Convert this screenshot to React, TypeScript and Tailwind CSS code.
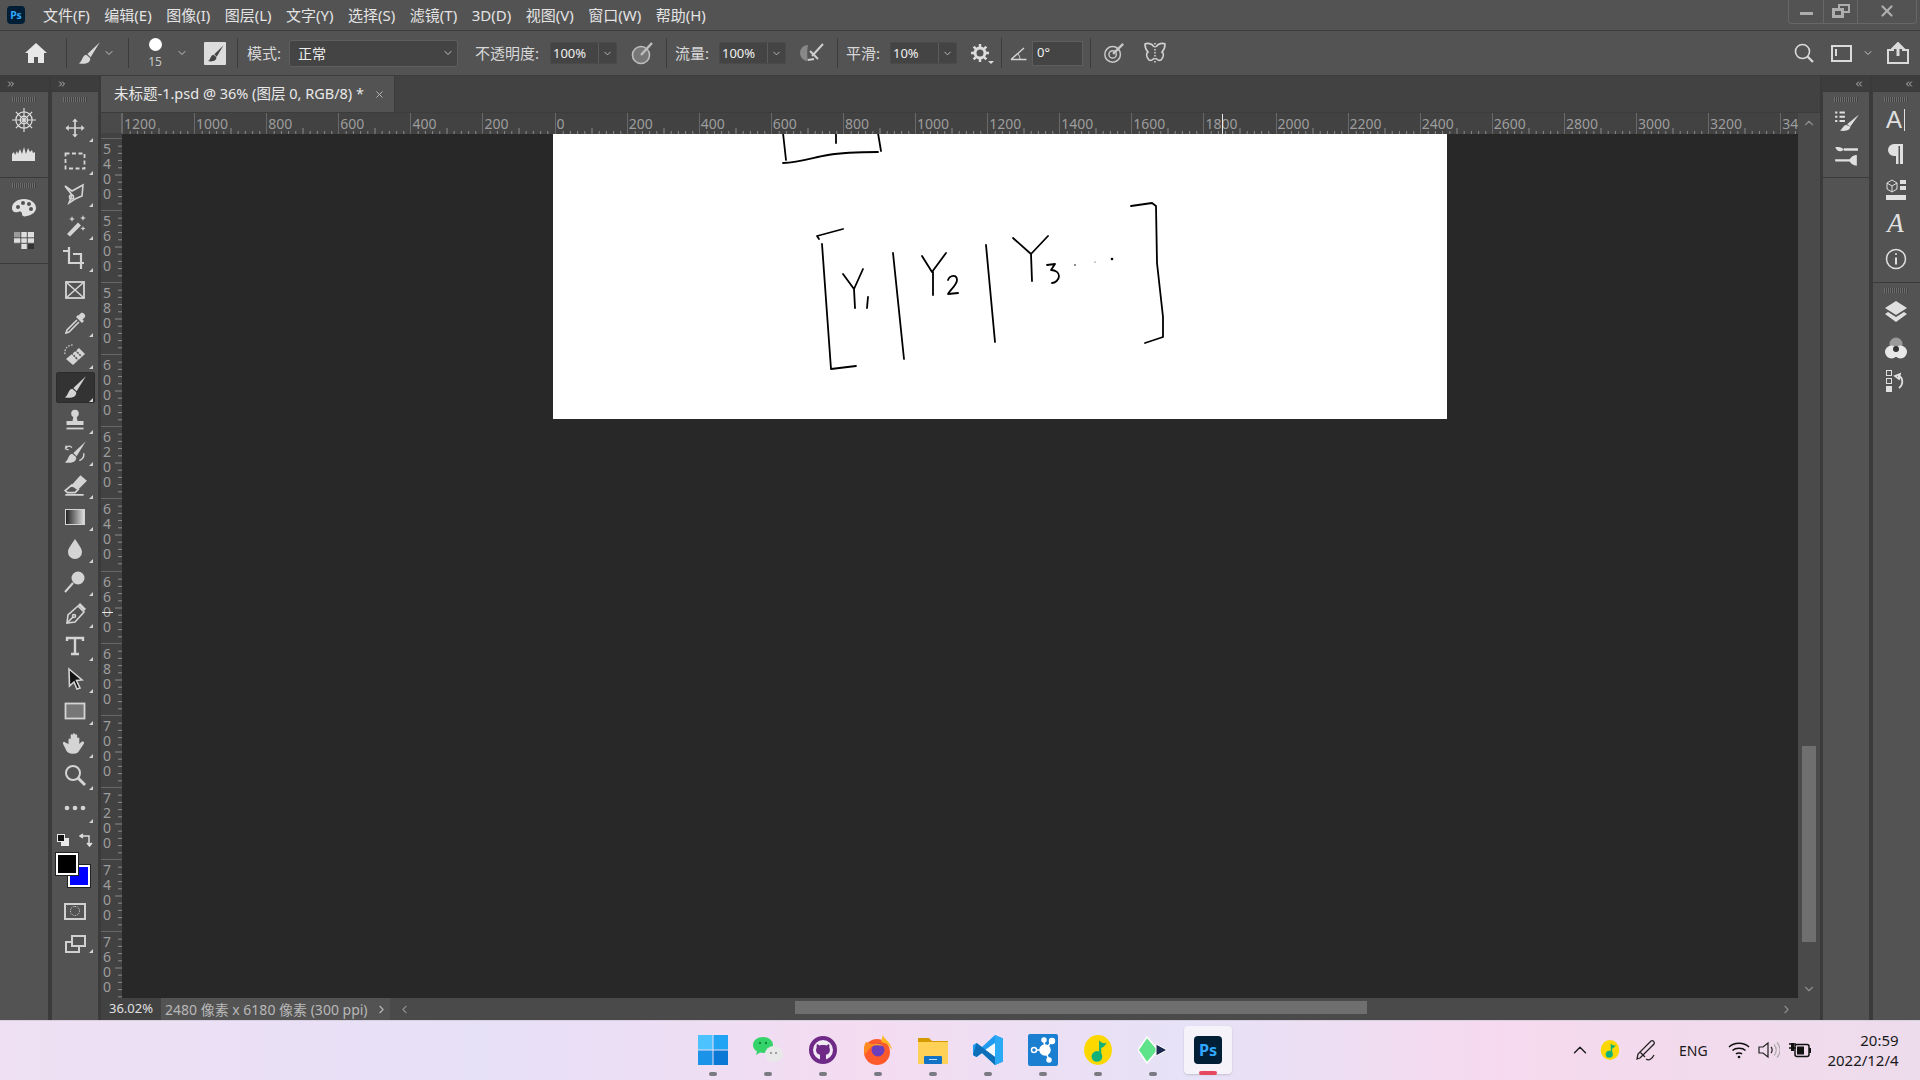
import React from "react";
import { ChevronDown, ChevronUp, ChevronLeft, ChevronRight, ChevronsRight, ChevronsLeft, X } from "lucide-react";

const FONT = "font-['Noto_Sans','Noto_Sans_CJK_SC',sans-serif]";

function Ic({ children, s = 24, className = "" }: { children: React.ReactNode; s?: number; className?: string }) {
  return (
    <svg width={s} height={s} viewBox="0 0 24 24" fill="none" stroke="currentColor" strokeWidth={1.6} className={className}>
      {children}
    </svg>
  );
}

const brushPath = (
  <>
    <path d="M22 2 L10.500 13 L13.500 16 Z" fill="currentColor" stroke="none" />
    <path d="M9.500 13.500 C5 14.500 6.500 19.500 2.500 21.500 C8 23 14 21 13 16.500 Z" fill="currentColor" stroke="none" />
  </>
);

const tools: { n: React.ReactNode; tri?: boolean; active?: boolean; s?: number }[] = [
  { tri: true, s: 20, n: <><path d="M12 3v18M3 12h18" strokeWidth={2} /><path d="M12 .5l3.500 4H8.500zM12 23.500l3.500-4H8.500zM.5 12l4-3.500v7zM23.500 12l-4-3.500v7z" fill="currentColor" stroke="none" /></> },
  { tri: true, s: 24, n: <rect x="2.500" y="4.500" width="19" height="15" strokeDasharray="4 2.500" strokeWidth={1.800} /> },
  { tri: true, s: 24, n: <><path d="M2 5l7 5 11-6-1 11-7 3-6 4 3-8-7-9z" /><circle cx="8.500" cy="16" r="2" /></> },
  { tri: true, s: 24, n: <><path d="M4 21L15 9.500l3 3L7 23.500z" fill="currentColor" stroke="none" /><path d="M9 3l.8 2.200 2.200.8-2.200.8L9 9l-.8-2.200L6 6l2.200-.8zM20 2l.8 2.200 2.200.8-2.200.8L20 8l-.8-2.200L17 5l2.200-.8zM20 13l.7 1.800 1.800.7-1.800.7-.7 1.800-.7-1.800-1.800-.7 1.800-.7z" fill="currentColor" stroke="none" /></> },
  { tri: true, s: 24, n: <path d="M0 5h6M6 1v16h15M18 23V8H10" strokeWidth={2.200} /> },
  { s: 24, n: <><rect x="3" y="4" width="18" height="16" strokeWidth={1.800} /><path d="M3 4l18 16M21 4L3 20" /></> },
  { tri: true, s: 24, n: <><path d="M14 9L4 19l-1 3 3-1L16 11" /><path d="M13 6l6 6 2-2-1.500-1.500L22 6c1-2-2-5-4-4l-2.500 2.500L15 4z" fill="currentColor" stroke="none" /></> },
  { tri: true, s: 24, n: <><path d="M3 16L16 5l6 6L10 22z" fill="currentColor" stroke="none" /><path d="M8.500 10L15 17M12 7l6.500 6.500" stroke="#535353" strokeDasharray="2 1" /><path d="M2 11C1 7 4 2 10 2" strokeDasharray="1.500 1.500" strokeWidth={1.200} /></> },
  { tri: true, active: true, s: 26, n: brushPath },
  { tri: true, s: 24, n: <><circle cx="12" cy="5.500" r="3.800" fill="currentColor" stroke="none" /><path d="M10.500 8h3l1 5h6v4H3.500v-4h6z" fill="currentColor" stroke="none" /><path d="M3.500 20.500h17" strokeWidth={1.800} /></> },
  { tri: true, s: 26, n: <>{brushPath}<path d="M3 9c2-3 5-3 6-1M3 9l3 1M3 9l1-3M20 13c1 4-2 6-4 7" strokeWidth={1.200} /></> },
  { tri: true, s: 26, n: <><path d="M9 13L17 4l6 5-8 8z" fill="currentColor" stroke="none" /><path d="M9 13l6 4-3 3H5l-2-2zM3 22h17" /></> },
  { tri: true, n: null },
  { tri: true, s: 24, n: <path d="M12 2c3 5 7 9 7 13a7 7 0 01-14 0c0-4 4-8 7-13z" fill="currentColor" stroke="none" /> },
  { tri: true, s: 24, n: <><circle cx="15" cy="8" r="6.500" fill="currentColor" stroke="none" /><path d="M10 13L2 22" strokeWidth={2} /></> },
  { tri: true, s: 24, n: <><path d="M4 21l1-8L15 4l6 6-9 10z" /><path d="M16 2l6 6" strokeWidth={3} /><path d="M4 21l6-6" /><circle cx="11" cy="14" r="1.500" /></> },
  { tri: true, s: 24, n: <path d="M4 7V4h16v3M12 4v16M8 20h8" strokeWidth={2.400} /> },
  { tri: true, s: 24, n: <path d="M6 2l13 11-5.500.5L17 21l-3 1-3-7-4.500 4z" fill="#111" stroke="currentColor" /> },
  { tri: true, s: 24, n: <rect x="2.500" y="4.500" width="19" height="15" fill="#777" strokeWidth={1.800} /> },
  { tri: true, s: 26, n: <path d="M6 12V8a1 1 0 012 0V4a1 1 0 012 0V3a1 1 0 012 0v1a1 1 0 012 0v3a1 1 0 012 0v5l2-2c2-1 3 .5 2 2l-4 6c-1 2-3 3-5 3h-2c-3 0-5-2-6-5l-2-4c-.5-2 1-2.500 2-1.500z" fill="currentColor" stroke="none" /> },
  { tri: true, s: 24, n: <><circle cx="10" cy="9" r="7" strokeWidth={2} /><path d="M15 14l7 7" strokeWidth={3} /></> },
  { tri: true, s: 24, n: <><circle cx="4" cy="12" r="2.300" fill="currentColor" stroke="none" /><circle cx="12" cy="12" r="2.300" fill="currentColor" stroke="none" /><circle cx="20" cy="12" r="2.300" fill="currentColor" stroke="none" /></> },
];

function Tool({ t, i }: { t: (typeof tools)[number]; i: number }) {
  return (
    <div className="relative flex h-[32.400px] w-[39px] shrink-0 items-center justify-center text-[#d4d4d4]">
      {t.active && <div className="absolute inset-x-0 inset-y-px rounded-[2px] border border-[#2c2c2c] bg-[#333333]" />}
      {i === 12 ? (
        <div className="h-[16px] w-[20px] border border-[#d4d4d4] bg-[linear-gradient(90deg,#222,#ddd)]" />
      ) : (
        <span className="relative"><Ic s={t.s ?? 22}>{t.n}</Ic></span>
      )}
      {t.tri && <div className="absolute bottom-[2px] right-[2px] h-0 w-0 border-b-[4px] border-l-[4px] border-b-[#d4d4d4] border-l-transparent" />}
    </div>
  );
}

function Grip() {
  return <div className="mx-auto mt-[5px] h-[5px] w-[24px] bg-[repeating-linear-gradient(90deg,#6e6e6e_0_1px,#414141_1px_2px)]" />;
}

function Strip({ dir }: { dir: "l" | "r" }) {
  return (
    <div className="flex h-[15px] items-center bg-[#3d3d3d] px-[6px] text-[#cfcfcf]" style={{ justifyContent: dir === "r" ? "flex-start" : "flex-end" }}>
      {dir === "r" ? <ChevronsRight size={10} /> : <ChevronsLeft size={10} />}
    </div>
  );
}

function Divider() {
  return <div className="h-[30px] w-px shrink-0 bg-[#3c3c3c]" />;
}

function NumBox({ v, w = 67 }: { v: string; w?: number }) {
  return (
    <div className="flex h-[22px] items-center rounded-[2px] border border-[#4a4a4a] bg-[#444444] text-[13px] text-[#f0f0f0]" style={{ width: w }}>
      <span className="w-[48px] border-r border-[#5c5c5c] pl-[2px] leading-[20px]">{v}</span>
      <span className="flex flex-1 justify-center text-[#c0c0c0]"><ChevronDown size={11} /></span>
    </div>
  );
}

function TopRuler() {
  const labels = ["1200", "1000", "800", "600", "400", "200", "0", "200", "400", "600", "800", "1000", "1200", "1400", "1600", "1800", "2000", "2200", "2400", "2600", "2800", "3000", "3200", "3400"];
  return (
    <div className="relative flex h-[21px] flex-1 overflow-hidden bg-[#424242]">
      {labels.map((l, i) => (
        <div key={i} className="relative h-full w-[72.100px] shrink-0 border-l border-[#686868]">
          <span className="absolute left-[1px] top-[1px] text-[14px] leading-[19px] text-[#9d9d9d]">{l}</span>
          <svg width="72" height="21" className="absolute left-0 top-0">
            {[...Array(9)].map((_, k) => (
              <path key={k} d={`M${(k + 1) * 7.2} ${k === 4 ? 15 : 18}V21`} stroke="#8a8a8a" strokeWidth={1} />
            ))}
          </svg>
        </div>
      ))}
      <div className="absolute left-[1100px] top-[1px] h-[20px] w-px bg-[#e8e8e8]" />
    </div>
  );
}

function SideRuler() {
  const labels = ["5400", "5600", "5800", "6000", "6200", "6400", "6600", "6800", "7000", "7200", "7400", "7600"];
  return (
    <div className="relative w-[21px] shrink-0 overflow-hidden bg-[#424242] pt-[5px]">
      {labels.map((l) => (
        <div key={l} className="relative h-[72.100px] border-t border-[#686868]">
          <div className="absolute left-[2px] top-[2px] w-[9px] break-all text-[14px] leading-[15px] text-[#9d9d9d]">{l}</div>
          <svg width="21" height="72" className="absolute left-0 top-0">
            {[...Array(9)].map((_, k) => (
              <path key={k} d={`M${k === 4 ? 14 : 17} ${(k + 1) * 7.2}H21`} stroke="#8a8a8a" strokeWidth={1} />
            ))}
          </svg>
        </div>
      ))}
      <div className="absolute left-[1px] top-[479px] h-px w-[11px] bg-[#e8e8e8]" />
    </div>
  );
}

function Drawing() {
  const lines = [
    "M783 133L786 160", "M783 163C800 162 815 157 828 155C845 152 860 152 878 152", "M878 133L881 151", "M836 133V143",
    "M819 239L817 236L843 229", "M822 244L831 369L856 366", "M843 274L854 289L863 269M854 289L855 308", "M868 297L867 308",
    "M893 253L904 359", "M922 256L932 272L946 253M933 272V295", "M948 280C950 275 957 274 957 280C957 285 950 290 948 294L958 293",
    "M986 245L995 342", "M1013 238L1031 254L1048 236M1031 254L1032 281",
    "M1047 265L1055 264L1051 270C1056 270 1059 273 1059 276C1059 280 1055 283 1052 283",
    "M1131 206L1152 203L1156 206L1157 263L1163 317V337L1145 343",
  ];
  return (
    <svg viewBox="553 133 894 286" width="894" height="286" fill="none" stroke="#000" strokeWidth={1.8} strokeLinecap="round" strokeLinejoin="round">
      {lines.map((d, i) => <path key={i} d={d} />)}
      <circle cx="1075" cy="265" r=".8" fill="#000" stroke="none" /><circle cx="1095" cy="262" r=".5" fill="#000" stroke="none" /><circle cx="1112" cy="259" r="1.300" fill="#000" stroke="none" />
    </svg>
  );
}

function PsTile({ s }: { s: number }) {
  return (
    <div className="flex items-center justify-center rounded-[4px] bg-[#001e36] font-bold leading-none text-[#31a8ff]" style={{ width: s, height: s, fontSize: s * 0.58 }}>Ps</div>
  );
}

const Qq = ({ s = 28 }: { s?: number }) => (
  <svg width={s} height={s} viewBox="0 0 28 28">
    <ellipse cx="14" cy="14" rx="13" ry="14" fill="#fcd800" />
    <circle cx="13" cy="20" r="5" fill="#10b27a" />
    <path d="M15 20V5c2 3 6 3 7 2-1 3-4 5-5 5v8z" fill="#10b27a" />
  </svg>
);

const taskIcons: React.ReactNode[] = [
  <svg width="30" height="30" viewBox="0 0 30 30"><rect width="14.500" height="14.500" x="0" y="0" fill="#4cc2ff" /><rect width="14.500" height="14.500" x="15.500" y="0" fill="#20a4f3" /><rect width="14.500" height="14.500" x="0" y="15.500" fill="#1a93e8" /><rect width="14.500" height="14.500" x="15.500" y="15.500" fill="#0a78d4" /></svg>,
  <svg width="30" height="28" viewBox="0 0 30 28"><path d="M10 1c5.500 0 10 3.500 10 8s-4.500 8-10 8c-1 0-2-.1-3-.4L3 19l1-3.500C1.500 14 0 11.700 0 9c0-4.500 4.500-8 10-8z" fill="#34d46a" /><ellipse cx="21" cy="18" rx="9" ry="8" fill="#e8e8e8" /><circle cx="18" cy="17" r="1" fill="#888" /><circle cx="23" cy="17" r="1" fill="#888" /><circle cx="7" cy="7" r="1.200" fill="#138a3f" /><circle cx="13" cy="7" r="1.200" fill="#138a3f" /></svg>,
  <svg width="28" height="28" viewBox="0 0 28 28"><circle cx="14" cy="14" r="12" fill="#f1e9f3" stroke="#6e2a86" strokeWidth={4} /><path d="M8 8l2.500 1.500c2-.6 5-.6 7 0L20 8c.5 1.500.5 2.500.3 3.500 1 1.500 1 5-1.300 6.500l-2 .7V24h-6v-5.300l-2-.7C6.700 16.500 6.700 13 7.700 11.500 7.500 10.500 7.500 9.500 8 8z" fill="#6e2a86" /></svg>,
  <svg width="30" height="32" viewBox="0 0 30 32"><circle cx="14" cy="18" r="13" fill="#ff5a2c" /><path d="M20 1c1 4 8 7 9 15C25 9 22 9 18 8z" fill="#ffb71f" /><path d="M3 8c-3 5-2 9-1 13 3-5 5-8 9-10z" fill="#ff8a1f" /><circle cx="15" cy="16" r="6.500" fill="#6b3fbc" /><path d="M8 12c3-3 9-3 12 0-4-1-8-1-12 0z" fill="#ffa21f" /></svg>,
  <svg width="30" height="28" viewBox="0 0 30 28"><path d="M0 2h11l3 3h16v23H0z" fill="#d49a00" /><path d="M0 6h30v22H0z" fill="#ffd257" /><rect x="6" y="20" width="18" height="8" rx="1" fill="#1273c6" /><path d="M11 23.500h8" stroke="#bfe0ff" /></svg>,
  <svg width="30" height="30" viewBox="0 0 30 30"><path d="M22 0l8 3.500v23L22 30 9 18l-5.500 4L0 20v-10l3.500-2L9 12z" fill="#1f9cf0" /><path d="M22 8L12 15l10 7z" fill="#fff" fillOpacity=".95" /><path d="M22 0v30l8-3.500v-23z" fill="#2aa9f5" /><path d="M3.500 8L22 22v8L9 18 3.500 22 0 20z" fill="#0d6fb8" /></svg>,
  <svg width="30" height="32" viewBox="0 0 30 32"><rect width="30" height="32" rx="2" fill="#1a7fd0" /><g fill="#fff" stroke="#fff" strokeWidth={1.500}><circle cx="17" cy="16" r="5" /><circle cx="24" cy="7" r="2.500" /><circle cx="16" cy="6" r="2" /><circle cx="21" cy="26" r="2" /><path d="M17 16L24 7M17 16L16 6M17 16L21 26M17 16H7" /></g><circle cx="6" cy="16" r="2.500" fill="#1a7fd0" stroke="#fff" strokeWidth={1.500} /></svg>,
  <Qq s={30} />,
  <svg width="30" height="28" viewBox="0 0 30 28"><path d="M9 1L20 14 9 27 0 14z" fill="#5fe38a" stroke="#fff" strokeWidth={1.500} /><path d="M18 8l11 6-11 6z" fill="#1c2a52" stroke="#fff" /></svg>,
];

const rightIcons1: React.ReactNode[] = [
  <Ic s={26}><path d="M2 5h2M6 5h5M2 9h2M6 9h5M2 13h2M6 13h5" strokeWidth={1.800} /><path d="M24 7L13 16l3 2z" fill="currentColor" stroke="none" /><path d="M12 16.500c-3 .5-3 4-6 5 5 1.500 10 0 10-3.500z" fill="currentColor" stroke="none" /></Ic>,
  <Ic s={26}><path d="M10 6h13M2 16h14" strokeWidth={2.200} /><path d="M2 4c4-1 6 0 8 2-2 2-6 3-8-2zM22 11v10c-3 0-6-2-7-5 1-3 4-5 7-5z" fill="currentColor" stroke="none" /></Ic>,
];

export default function App() {
  const menus = ["文件(F)", "编辑(E)", "图像(I)", "图层(L)", "文字(Y)", "选择(S)", "滤镜(T)", "3D(D)", "视图(V)", "窗口(W)", "帮助(H)"];
  return (
    <div className={`flex h-[1080px] w-[1920px] flex-col overflow-hidden bg-[#3a3a3a] ${FONT}`}>
      {/* title bar */}
      <div className="flex h-[31px] shrink-0 items-center border-b border-[#3c3c3c] bg-[#535353] pl-[7px] text-[15px] text-[#e4e4e4]">
        <PsTile s={18} />
        <div className="ml-[18px] flex gap-[14.500px]">
          {menus.map((m) => <span key={m} className="leading-[30px]">{m}</span>)}
        </div>
        <div className="ml-auto mb-[7px] mr-[3px] flex h-[24px] w-[129px] items-center rounded-b-[4px] border border-t-0 border-[#676767] text-[#adadad]">
          <div className="flex h-full w-[35px] items-center justify-center border-r border-[#676767]"><div className="mt-[4px] h-[3px] w-[13px] bg-[#adadad]" /></div>
          <div className="flex h-full w-[34px] items-center justify-center border-r border-[#676767]">
            <div className="relative h-[14px] w-[18px]">
              <div className="absolute right-0 top-0 h-[9px] w-[12px] border-2 border-[#adadad]" />
              <div className="absolute bottom-0 left-0 h-[10px] w-[12px] border-[3px] border-[#adadad] bg-[#535353]" />
            </div>
          </div>
          <div className="flex flex-1 justify-center"><X size={18} strokeWidth={3} /></div>
        </div>
      </div>
      {/* options bar */}
      <div className="flex h-[45px] shrink-0 items-center border-b border-[#3c3c3c] bg-[#535353] text-[15px] text-[#d8d8d8]">
        <div className="ml-[25px] text-[#e8e8e8]">
          <svg width="22" height="22" viewBox="0 0 22 22"><path d="M11 1L0 11h3v10h6v-6h4v6h6V11h3z" fill="currentColor" /></svg>
        </div>
        <div className="ml-[19px]"><Divider /></div>
        <div className="ml-[9px]"><Ic s={26}>{brushPath}</Ic></div>
        <ChevronDown size={12} className="ml-[1px] text-[#c4c4c4]" />
        <div className="ml-[13px]"><Divider /></div>
        <div className="ml-[18px] flex w-[16px] flex-col items-center">
          <div className="h-[13px] w-[13px] rounded-full bg-white" />
          <span className="mt-[5px] text-[12px] leading-[12px] text-[#c8c8c8]">15</span>
        </div>
        <ChevronDown size={12} className="ml-[13px] text-[#c4c4c4]" />
        <div className="ml-[16px] flex h-[23px] w-[22px] items-center justify-center rounded-[1px] bg-[#dcdcdc] text-[#444444]">
          <Ic s={19}>{brushPath}</Ic>
        </div>
        <div className="ml-[11px]"><Divider /></div>
        <span className="ml-[9px] w-[42px]">模式:</span>
        <div className="flex h-[27px] w-[169px] items-center justify-between rounded-[2px] border border-[#5e5e5e] bg-[#444444] pl-[8px] pr-[3px] text-[14px] text-[#ececec]">
          <span>正常</span><ChevronDown size={12} className="text-[#c4c4c4]" />
        </div>
        <span className="ml-[17px] w-[75px] whitespace-nowrap">不透明度:</span>
        <NumBox v="100%" />
        <div className="ml-[13px] text-[#bdbdbd]">
          <Ic s={24}><circle cx="11" cy="14" r="8.500" fill="#777" /><path d="M22 2L11 14" strokeWidth={2.500} /></Ic>
        </div>
        <div className="ml-[12px]"><Divider /></div>
        <span className="ml-[8px] w-[44px]">流量:</span>
        <NumBox v="100%" />
        <div className="ml-[14px] text-[#cfcfcf]">
          <Ic s={24}><path d="M8 4a8 8 0 000 16c-1-4-1-12 0-16z" fill="#888" stroke="none" /><path d="M23 3L12 15M10 10l8 8M8 19l6-1" strokeWidth={2} /></Ic>
        </div>
        <div className="ml-[13px]"><Divider /></div>
        <span className="ml-[8px] w-[44px]">平滑:</span>
        <NumBox v="10%" />
        <div className="relative ml-[14px] text-[#dcdcdc]">
          <svg width="18" height="18" viewBox="0 0 18 18"><circle cx="9" cy="9" r="5" fill="none" stroke="currentColor" strokeWidth={3} /><path d="M9 0v4M9 14v4M0 9h4M14 9h4M2.600 2.600l2.800 2.800M12.600 12.600l2.800 2.800M15.400 2.600l-2.800 2.800M5.400 12.600l-2.800 2.800" stroke="currentColor" strokeWidth={2.500} /></svg>
          <div className="absolute -bottom-[2px] -right-[5px] h-0 w-0 border-x-[3px] border-t-[3px] border-x-transparent border-t-[#dcdcdc]" />
        </div>
        <div className="ml-[12px]"><Divider /></div>
        <div className="ml-[8px] text-[#d4d4d4]">
          <svg width="17" height="15" viewBox="0 0 17 15"><path d="M1 13.500h15.500M1 13.500L14 2" stroke="currentColor" fill="none" strokeWidth={1.400} /><path d="M8 8c1 1 2 3 2 5.500" stroke="currentColor" fill="none" /></svg>
        </div>
        <div className="ml-[5px] flex h-[25px] w-[51px] items-center border border-[#5e5e5e] bg-[#444444] pl-[4px] text-[13px] text-[#f0f0f0]">0°</div>
        <div className="ml-[7px]"><Divider /></div>
        <div className="ml-[12px] text-[#c8c8c8]">
          <Ic s={22}><circle cx="10.500" cy="13.500" r="8.500" /><circle cx="10.500" cy="13.500" r="4" /><path d="M22 2L11 13" strokeWidth={2.500} /></Ic>
        </div>
        <div className="ml-[18px] text-[#d0d0d0]">
          <Ic s={24}><path d="M11 6C9 2 4 2 2 3c0 3 1 6 3 8-2 1-2 5 1 8 2 1 4 0 5-2M13 6c2-4 7-4 9-3 0 3-1 6-3 8 2 1 2 5-1 8-2 1-4 0-5-2" /><path d="M12 2v20" strokeDasharray="1.500 1.500" /></Ic>
        </div>
        <div className="ml-auto flex items-center text-[#dadada]">
          <svg width="20" height="20" viewBox="0 0 20 20" fill="none" stroke="currentColor"><circle cx="8.500" cy="8.500" r="7" strokeWidth={1.600} /><path d="M13.500 13.500l5.500 5.500" strokeWidth={2.200} /></svg>
          <div className="relative ml-[17px] h-[17px] w-[21px] border-2 border-[#dadada]">
            <div className="absolute left-[2px] top-[2px] h-[7px] w-[2px] bg-[#dadada]" />
          </div>
          <ChevronDown size={12} className="ml-[10px] text-[#c4c4c4]" />
          <div className="ml-[13px] mr-[11px]">
            <svg width="22" height="22" viewBox="0 0 22 22" fill="none" stroke="currentColor" strokeWidth={2}><path d="M7 8H1v13h20V8h-6" /><path d="M11 14V2" strokeWidth={3} /><path d="M6 6l5-5 5 5z" fill="currentColor" /></svg>
          </div>
        </div>
      </div>
      {/* workspace */}
      <div className="flex min-h-0 flex-1 text-[#c8c8c8]">
        {/* far left panels */}
        <div className="flex w-[49px] shrink-0 flex-col gap-px">
          <Strip dir="r" />
          <div className="flex h-[85px] flex-col items-center border-r border-[#3c3c3c] bg-[#535353]">
            <div className="w-full"><Grip /></div>
            <div className="mt-[5px] text-[#dcdcdc]">
              <Ic s={26}><g strokeWidth={1.100}><circle cx="12" cy="12" r="7.500" /><circle cx="12" cy="12" r="3.500" /><path d="M12 1v22M1 12h22M4.500 4.500l15 15M19.500 4.500l-15 15" /></g></Ic>
            </div>
            <div className="mt-[14px] text-[#e0e0e0]">
              <svg width="24" height="14" viewBox="0 0 24 14"><path d="M0 14V7l2-2 1 3 2-4 1 3 2-5 2 5 2-7 2 7 2-6 2 4 2-2 1 3 2-1v9z" fill="currentColor" /></svg>
            </div>
          </div>
          <div className="flex h-[85px] flex-col items-center border-r border-[#3c3c3c] bg-[#535353]">
            <div className="w-full"><Grip /></div>
            <div className="mt-[10px] text-[#e0e0e0]">
              <svg width="24" height="20" viewBox="0 0 24 20"><path d="M12 1C5 1 0 5 0 10c0 4 3 5 6 4 3-1 4 0 4 2 0 2 2 3 5 2 5-1 9-4 9-8 0-5-5-9-12-9z" fill="currentColor" /><circle cx="6" cy="9" r="2" fill="#535353" /><circle cx="11" cy="5" r="2" fill="#535353" /><circle cx="17" cy="6" r="2" fill="#535353" /><circle cx="19" cy="11" r="2" fill="#535353" /></svg>
            </div>
            <div className="mt-[14px]">
              <svg width="20" height="17" viewBox="0 0 20 17" stroke="#535353"><rect width="20" height="17" fill="#dedede" stroke="none" /><rect x="0" y="0" width="7" height="6" fill="#9a9a9a" stroke="none" /><rect y="11.500" width="7" height="5.500" fill="#555" stroke="none" /><rect x="13.500" y="11.500" width="6.500" height="5.500" fill="#333" stroke="none" /><path d="M6.800 0v17M13.300 0v17M0 5.800h20M0 11.300h20" fill="none" /></svg>
            </div>
          </div>
          <div className="flex-1 border-r border-[#3c3c3c] bg-[#535353]" />
        </div>
        {/* tools */}
        <div className="ml-[2px] flex w-[48px] shrink-0 flex-col">
          <Strip dir="r" />
          <div className="mt-px flex flex-1 flex-col items-center border-x border-[#3c3c3c] bg-[#535353]">
            <Grip />
            <div className="h-[10px] shrink-0" />
            {tools.map((t, i) => <Tool key={i} t={t} i={i} />)}
            <div className="mt-[8px] flex w-[36px] items-center justify-between">
              <div className="relative h-[12px] w-[12px]">
                <div className="absolute bottom-0 right-0 h-[8px] w-[8px] bg-[#e8e8e8]" />
                <div className="absolute left-0 top-0 h-[8px] w-[8px] border border-[#e8e8e8] bg-[#111]" />
              </div>
              <svg width="14" height="14" viewBox="0 0 14 14" fill="none" stroke="#ddd" strokeWidth={1.500}><path d="M1 3h9v9" /><path d="M4 1L1 3l3 2M8 10l2.500 3 2.500-3" fill="#ddd" /></svg>
            </div>
            <div className="relative mt-[6px] h-[34px] w-[34px] shrink-0 -translate-x-[2px]">
              <div className="absolute bottom-0 right-0 h-[22px] w-[22px] border-2 border-white bg-[#0000ff] outline outline-1 outline-[#222]" />
              <div className="absolute left-0 top-0 h-[22px] w-[22px] border-2 border-white bg-black outline outline-1 outline-[#222]" />
            </div>
            <div className="mt-[16px] flex h-[17px] w-[22px] items-center justify-center border-2 border-[#d0d0d0]">
              <div className="h-[10px] w-[10px] rounded-full border border-dotted border-[#d8d8d8]" />
            </div>
            <div className="relative mt-[15px] h-[18px] w-[36px]">
              <div className="absolute left-[8px] top-[6px] h-[12px] w-[15px] border-2 border-[#d0d0d0]" />
              <div className="absolute left-[14px] top-0 h-[12px] w-[15px] border-2 border-[#d0d0d0] bg-[#535353]" />
              <div className="absolute bottom-0 right-0 h-0 w-0 border-b-[4px] border-l-[4px] border-b-[#d4d4d4] border-l-transparent" />
            </div>
          </div>
        </div>
        {/* centre */}
        <div className="ml-[2px] flex min-w-0 flex-1 flex-col">
          <div className="flex h-[36px] shrink-0 bg-[#424242]">
            <div className="flex w-[294px] items-center whitespace-nowrap border-r border-[#3c3c3c] bg-[#535353] pl-[13px] text-[14.500px] text-[#e8e8e8]">
              <span>未标题-1.psd @ 36% (图层 0, RGB/8) *</span>
              <X size={11} className="ml-[10px] text-[#bcbcbc]" />
            </div>
          </div>
          <div className="flex h-[21px] shrink-0 border-t border-[#3c3c3c]">
            <div className="w-[21px] shrink-0 border-r border-[#686868] bg-[#4a4a4a]" />
            <TopRuler />
            <div className="flex w-[22px] shrink-0 items-center justify-center bg-[#4a4a4a] text-[#8d8d8d]"><ChevronUp size={14} /></div>
          </div>
          <div className="flex min-h-0 flex-1">
            <SideRuler />
            <div className="min-w-0 flex-1 overflow-hidden bg-[#282828] pl-[431px]">
              <div className="h-[286px] w-[894px] bg-white"><Drawing /></div>
            </div>
            <div className="flex w-[22px] shrink-0 flex-col items-center bg-[#4a4a4a] text-[#8d8d8d]">
              <div className="h-[613px] shrink-0" />
              <div className="h-[196px] w-[14px] shrink-0 bg-[#6f6f6f]" />
              <div className="mt-auto mb-[2px]"><ChevronDown size={14} /></div>
            </div>
          </div>
          <div className="flex h-[22px] shrink-0 items-center bg-[#4a4a4a] text-[#b8b8b8]">
            <div className="flex h-full w-[60px] items-center justify-center bg-[#424242] text-[13px] text-[#e0e0e0]">36.02%</div>
            <div className="flex h-full w-[229px] items-center justify-between bg-[#535353] pl-[4px] pr-[2px] text-[14px]">
              <span className="whitespace-nowrap">2480 像素 x 6180 像素 (300 ppi)</span>
              <ChevronRight size={13} />
            </div>
            <ChevronLeft size={13} className="ml-[8px] text-[#8d8d8d]" />
            <div className="mb-[3px] ml-[384px] h-[13px] w-[572px] bg-[#6f6f6f]" />
            <ChevronRight size={13} className="ml-[413px] text-[#8d8d8d]" />
          </div>
        </div>
        {/* right col 1 */}
        <div className="ml-[2px] flex w-[48px] shrink-0 flex-col gap-px">
          <Strip dir="l" />
          <div className="flex h-[85px] flex-col items-center border-x border-[#3c3c3c] bg-[#535353] text-[#e0e0e0]">
            <div className="w-full"><Grip /></div>
            <div className="mt-[5px]">{rightIcons1[0]}</div>
            <div className="mt-[10px]">{rightIcons1[1]}</div>
          </div>
          <div className="flex-1 border-x border-[#3c3c3c] bg-[#535353]" />
        </div>
        {/* right col 2 */}
        <div className="ml-[2px] flex w-[48px] shrink-0 flex-col gap-px">
          <Strip dir="l" />
          <div className="flex h-[190px] flex-col items-center border-l border-[#3c3c3c] bg-[#535353] pr-[2px] text-[#e0e0e0]">
            <div className="w-full"><Grip /></div>
            <div className="mt-[4px] flex h-[28px] items-center font-['Liberation_Sans'] text-[24px] leading-none">A<span className="ml-[2px] h-[22px] w-px bg-[#e0e0e0]" /></div>
            <div className="mt-[10px]">
              <svg width="16" height="20" viewBox="0 0 16 20"><path d="M14 0H6a6 6 0 000 12h2v8h2.500V2H12v18h3V0z" fill="currentColor" /></svg>
            </div>
            <div className="mt-[15px]">
              <svg width="20" height="21" viewBox="0 0 20 21"><path d="M6 1l5 3v6l-5 3-5-3V4zM1 4l5 3 5-3M6 7v6" fill="none" stroke="currentColor" /><rect x="14" y="1" width="6" height="4" fill="currentColor" /><rect x="14" y="7" width="6" height="4" fill="currentColor" /><rect y="16" width="20" height="5" fill="currentColor" /></svg>
            </div>
            <div className="mt-[8px] font-['Liberation_Serif'] text-[27px] italic leading-[30px]">A</div>
            <div className="mt-[10px]">
              <svg width="22" height="22" viewBox="0 0 22 22" fill="none" stroke="currentColor" strokeWidth={1.500}><circle cx="11" cy="11" r="9.500" /><path d="M11 9.500v7" strokeWidth={2} /><circle cx="11" cy="6" r="1" fill="currentColor" stroke="none" /></svg>
            </div>
          </div>
          <div className="flex flex-1 flex-col items-center border-l border-[#3c3c3c] bg-[#535353] pr-[2px] text-[#e0e0e0]">
            <div className="w-full"><Grip /></div>
            <div className="mt-[8px]">
              <svg width="22" height="21" viewBox="0 0 22 21"><path d="M11 0l11 7-11 7L0 7z" fill="currentColor" /><path d="M3 11l8 5 8-5 3 2-11 8L0 13z" fill="currentColor" /></svg>
            </div>
            <div className="mt-[15px]">
              <svg width="22" height="22" viewBox="0 0 22 22"><circle cx="11" cy="7" r="6.500" fill="#9a9a9a" /><circle cx="6.500" cy="15" r="6.500" fill="#e8e8e8" /><circle cx="15.500" cy="15" r="6.500" fill="#e8e8e8" /><circle cx="11" cy="12" r="3" fill="#333" /></svg>
            </div>
            <div className="mt-[11px]">
              <svg width="20" height="22" viewBox="0 0 20 22"><rect x=".5" y=".5" width="5" height="5" fill="none" stroke="currentColor" /><rect x=".5" y="8.500" width="5" height="5" fill="none" stroke="currentColor" /><rect y="16" width="6" height="6" fill="currentColor" /><path d="M14 4l-5 2 4 3zM12 6c5 1 6 8 1 12" fill="none" stroke="currentColor" strokeWidth={1.800} /></svg>
            </div>
          </div>
        </div>
      </div>
      {/* taskbar */}
      <div className="relative flex h-[60px] shrink-0 items-center border-t border-[#d8cfe0] bg-[linear-gradient(90deg,#efe0f3,#e6e0f7_25%,#f4dcf1_45%,#e6e2f7_62%,#f6d9ee_78%,#eddcec)] pb-[1px] text-[#1a1a1a]">
        <div className="flex w-full items-center pl-[685px]">
          <div className="flex items-center">
            {taskIcons.map((ic, i) => (
              <div key={i} className="relative flex h-[48px] w-[55px] items-center justify-center">
                {ic}
                <div className="absolute -bottom-[2px] left-[23.500px] h-[4px] w-[8px] rounded-[2px] bg-[#7a7a82]" />
              </div>
            ))}
            <div className="relative ml-[4px] flex h-[48px] w-[48px] items-center justify-center rounded-[4px] bg-[#f6f2f9] shadow-[0_1px_2px_rgba(0,0,0,.15)]">
              <PsTile s={28} />
              <div className="absolute bottom-[-1px] left-[15px] h-[4px] w-[18px] rounded-[2px] bg-[#e5485f]" />
            </div>
          </div>
          <div className="ml-[337px] flex items-center">
            <ChevronUp size={22} strokeWidth={1.500} />
            <div className="ml-[9px]"><Qq s={20} /></div>
            <div className="ml-[15px]">
              <svg width="22" height="22" viewBox="0 0 22 22" fill="none" stroke="#222" strokeWidth={1.300}><path d="M2 20l3-1L19 5c1-2-1-4-3-3L3 15zM5 13l5 5M11 20c3 2 6 0 8-4" /></svg>
            </div>
            <span className="ml-[22px] text-[14px]">ENG</span>
            <div className="ml-[20px]">
              <svg width="22" height="18" viewBox="0 0 22 18" fill="none" stroke="#111" strokeWidth={1.500}><path d="M1 6c5-5 15-5 20 0M4.500 9.500c3-3 10-3 13 0M8 13c1.500-1.500 4.500-1.500 6 0" /><circle cx="11" cy="16" r="1.300" fill="#111" stroke="none" /></svg>
            </div>
            <div className="ml-[8px]">
              <svg width="22" height="18" viewBox="0 0 22 18" fill="none" stroke="#222" strokeWidth={1.200}><path d="M1 6h4l5-4v14l-5-4H1z" /><path d="M13 6c1.500 1.500 1.500 4.500 0 6" /><path d="M16 3.500c3 3 3 8 0 11M19 1.500c4 4 4 11 0 15" stroke="#aaa" /></svg>
            </div>
            <div className="ml-[9px]">
              <svg width="22" height="16" viewBox="0 0 22 16"><path d="M0 2h7M0 6h7" stroke="#111" strokeWidth={1.500} /><path d="M2 1h3v8H2z" fill="#111" /><rect x="6" y="2.500" width="14" height="12" rx="2" fill="none" stroke="#111" strokeWidth={1.500} /><rect x="8" y="4.500" width="7" height="8" fill="#111" /><rect x="20" y="6" width="2" height="5" fill="#111" /></svg>
            </div>
            <div className="ml-[4px] w-[84px] text-right text-[15px] leading-[20px]">
              <div>20:59</div>
              <div>2022/12/4</div>
            </div>
          </div>
        </div>
      </div>
    </div>
  );
}
